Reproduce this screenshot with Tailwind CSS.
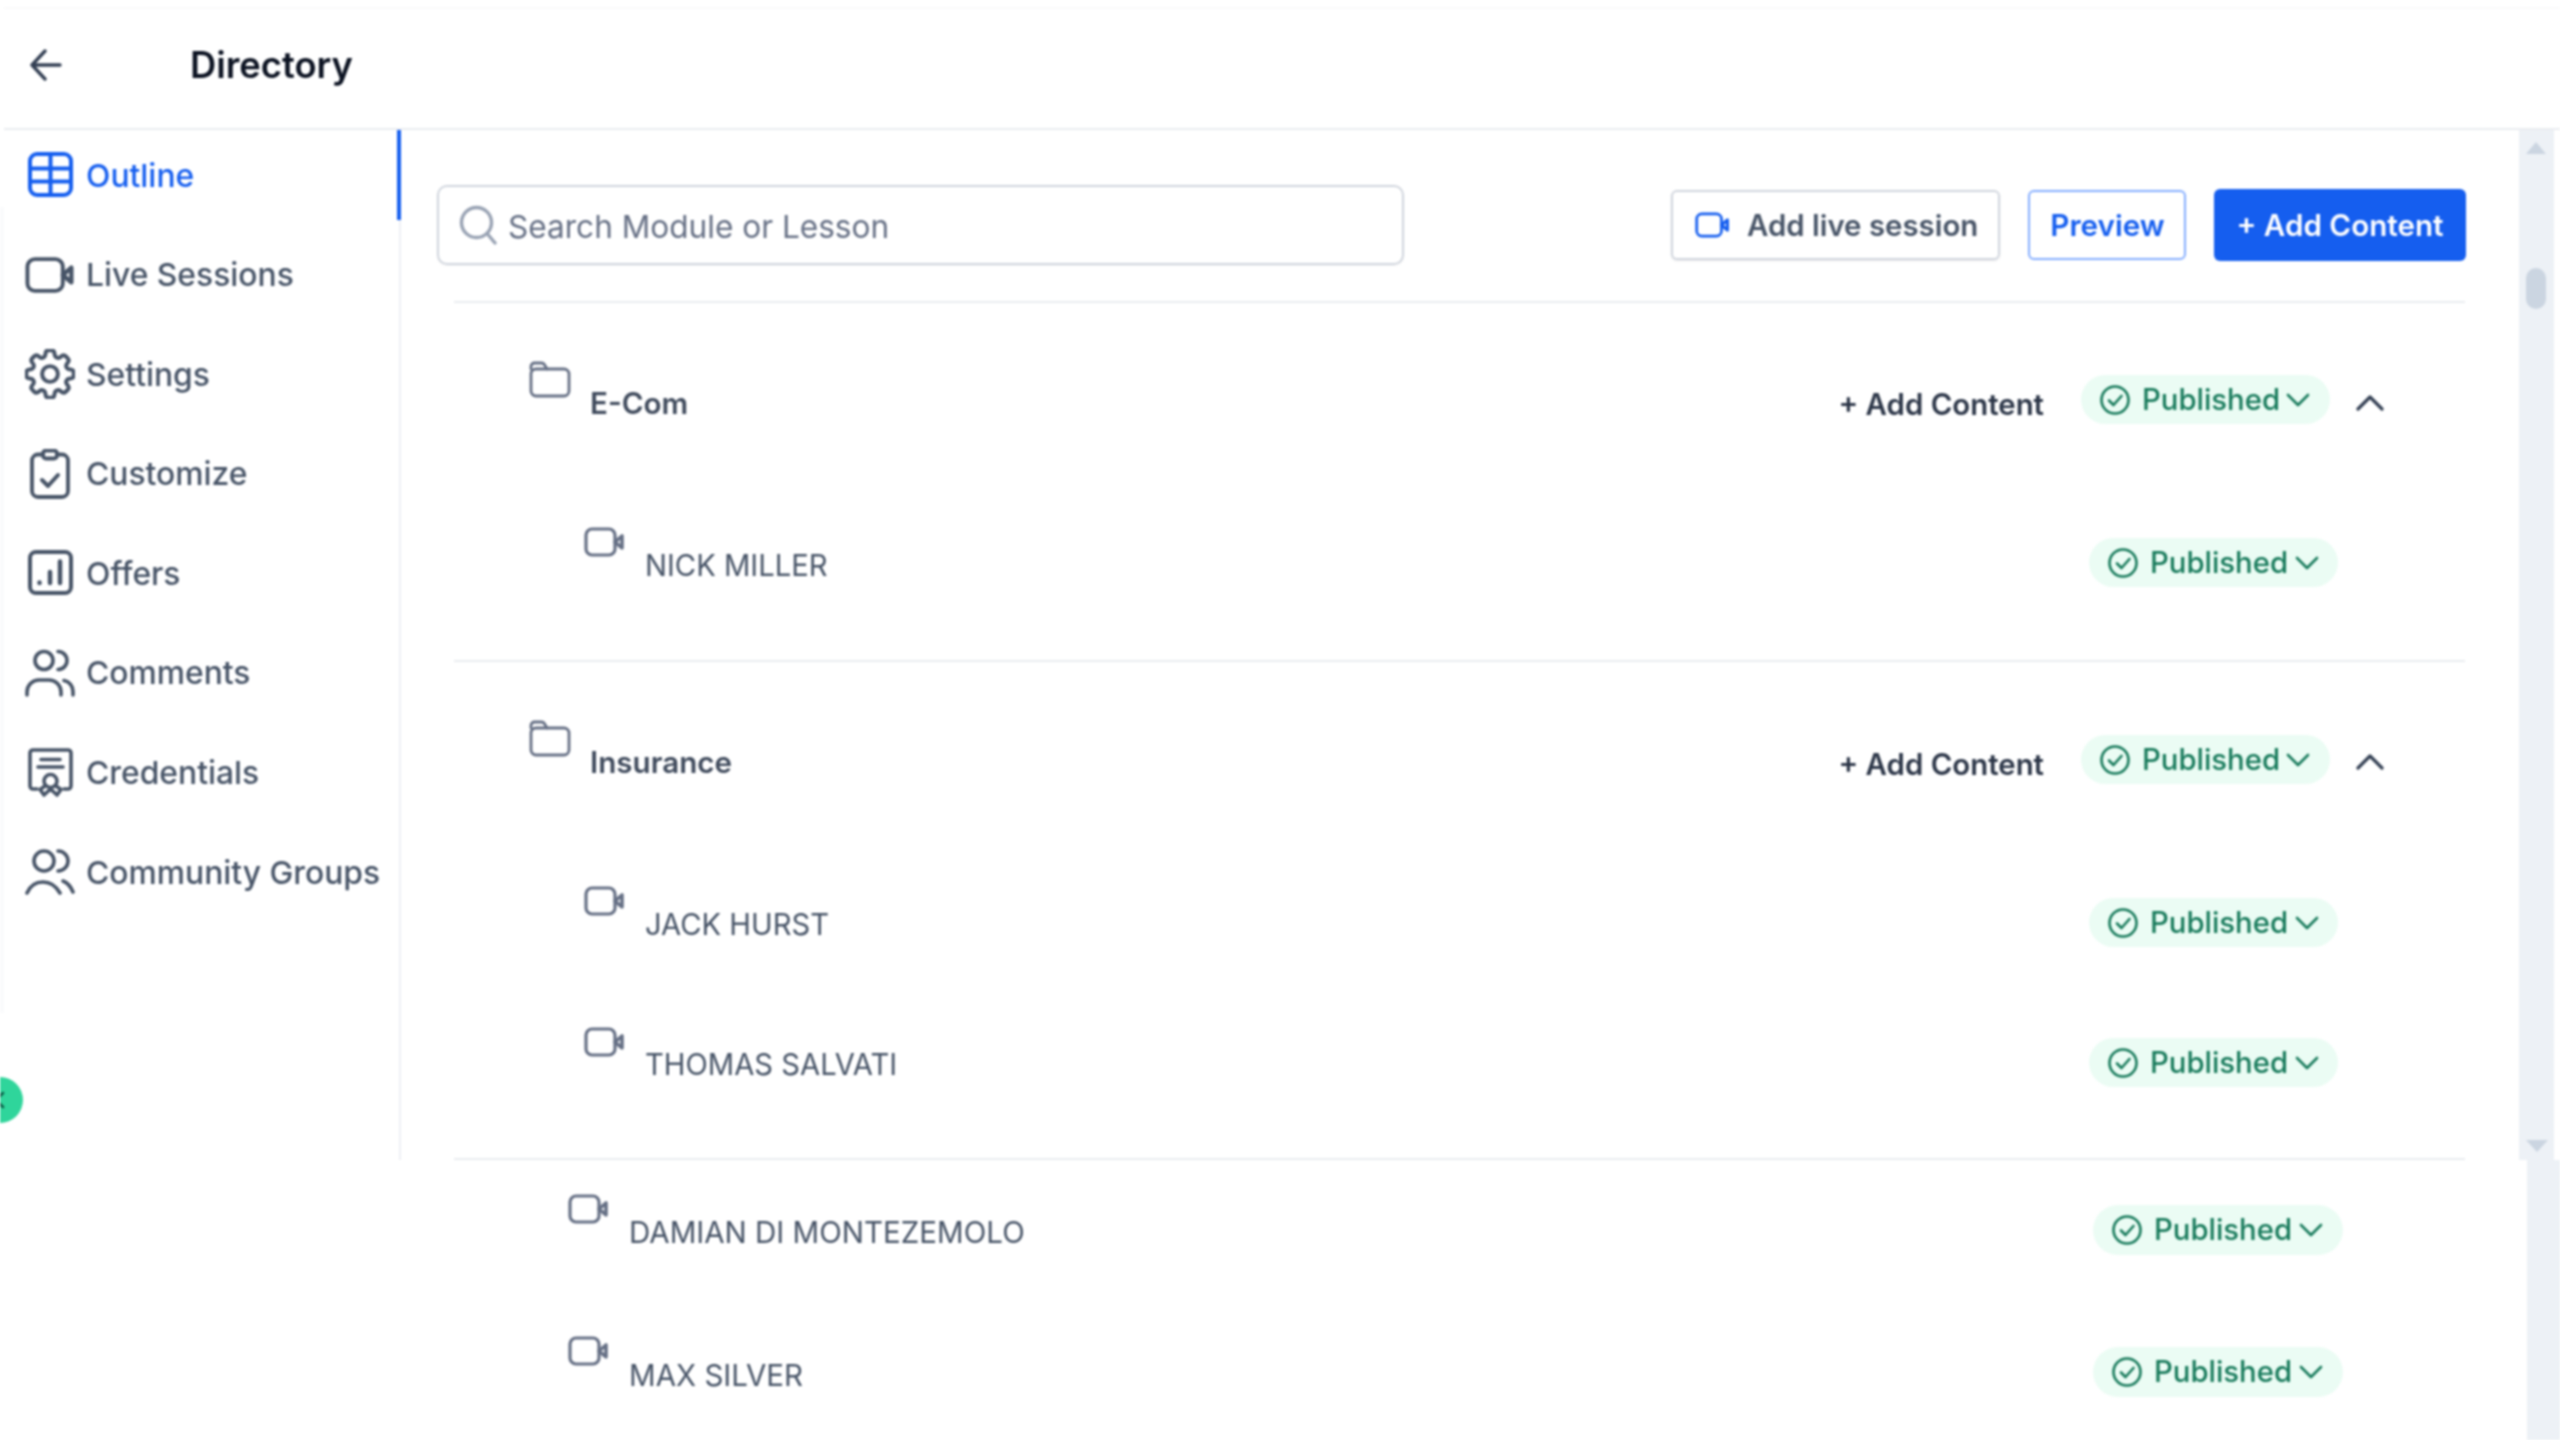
<!DOCTYPE html>
<html lang="en">
<head>
  <meta charset="UTF-8">
  <title>Directory</title>
  <script src="https://cdn.jsdelivr.net/npm/@tailwindcss/browser@4"></script>
</head>
<body class="bg-white font-['Inter','Liberation_Sans',sans-serif] overflow-hidden">
  <!-- shared icons -->
  <svg class="hidden">
    <symbol id="video" viewBox="0 0 41 30" fill="none" stroke="currentColor" stroke-width="3.200" stroke-linejoin="round" stroke-linecap="round">
      <rect x="2" y="2" width="29" height="26" rx="6"/>
      <path d="M31 15l7-6v12z" stroke-width="3.600"/>
    </symbol>
    <symbol id="folder" viewBox="0 0 42 37" fill="none" stroke="currentColor" stroke-width="2.800" stroke-linejoin="round" stroke-linecap="round">
      <path d="M2 8V5.500A3.500 3.500 0 0 1 5.500 2h7a3.500 3.500 0 0 1 3 1.700L18 8"/>
      <rect x="2" y="8" width="38" height="27" rx="5"/>
    </symbol>
    <symbol id="check" viewBox="0 0 32 32" fill="none" stroke="currentColor" stroke-width="2.600" stroke-linejoin="round" stroke-linecap="round">
      <circle cx="16" cy="16" r="13.500"/>
      <path d="M10 16.500l4.500 4.500 8-9"/>
    </symbol>
    <symbol id="down" viewBox="0 0 24 14" fill="none" stroke="currentColor" stroke-width="2.600" stroke-linejoin="round" stroke-linecap="round">
      <path d="M2 2l10 10 10-10"/>
    </symbol>
  </svg>

  <div class="relative w-[2560px] h-[1440px] overflow-hidden blur-[0.8px]">
    <!-- faint edges of the stitched capture -->
    <div class="absolute left-0 top-[207px] w-[4px] h-[806px] bg-[#fafbfc]"></div>
    <div class="absolute left-[4px] right-0 top-[7px] h-[2px] bg-[#fafafb]"></div>

    <!-- Header -->
    <header class="flex items-center h-[130px] pt-[2px] ml-[4px] border-b-2 border-[#eaecf0]">
      <svg class="ml-[25px] w-[34px] h-[32px] text-[#344054]" viewBox="0 0 34 32" fill="none" stroke="currentColor" stroke-width="3.400" stroke-linecap="round" stroke-linejoin="round">
        <path d="M31 16H3M16 2L3 16l13 14"/>
      </svg>
      <h1 class="ml-[127px] text-[36.300px] font-semibold text-[#0c1322]">Directory</h1>
    </header>

    <div class="flex h-[1030px]">
      <!-- Sidebar -->
      <nav class="relative w-[401px] shrink-0 border-r-2 border-[#eef0f5] flex flex-col gap-[9.600px] text-[31.800px] font-medium text-[#475467] whitespace-nowrap">
        <div class="absolute right-[-2px] top-0 w-[4px] h-[90px] bg-[#155eef]"></div>
        <a class="flex items-center h-[90px] pl-[25px] gap-[11px] text-[#155eef]">
          <svg class="w-[50px] h-[50px]" viewBox="0 0 50 50" fill="none" stroke="currentColor" stroke-width="4" stroke-linejoin="round">
            <rect x="5" y="4" width="41" height="41" rx="7"/><path d="M5 18.500h41M5 31.500h41M25.500 4v41"/>
          </svg>
          <span class="pt-[2px]">Outline</span>
        </a>
        <a class="flex items-center h-[90px] pl-[25px] gap-[11px]">
          <svg class="w-[50px] h-[38px] text-[#475467]"><use href="#video"/></svg>
          <span class="pt-[1px]">Live Sessions</span>
        </a>
        <a class="flex items-center h-[90px] pl-[25px] gap-[11px]">
          <svg class="w-[50px] h-[50px]" viewBox="2.500 2.500 19 19" fill="none" stroke="currentColor" stroke-width="1.500" stroke-linecap="round" stroke-linejoin="round">
            <path d="M10.343 3.940c.09-.542.56-.94 1.110-.94h1.093c.55 0 1.020.398 1.110.94l.149.894c.07.424.384.764.78.93.398.164.855.142 1.205-.108l.737-.527a1.125 1.125 0 0 1 1.450.12l.773.774c.39.389.44 1.002.12 1.450l-.527.737c-.25.35-.272.806-.107 1.204.165.397.505.71.93.78l.893.15c.543.09.94.559.94 1.109v1.094c0 .55-.397 1.020-.94 1.110l-.894.149c-.424.07-.764.383-.929.78-.165.398-.143.854.107 1.204l.527.738c.32.447.269 1.060-.12 1.450l-.774.773a1.125 1.125 0 0 1-1.449.12l-.738-.527c-.35-.25-.806-.272-1.203-.107-.398.165-.71.505-.781.929l-.149.894c-.09.542-.56.94-1.110.94h-1.094c-.55 0-1.019-.398-1.110-.94l-.148-.894c-.071-.424-.384-.764-.781-.93-.398-.164-.854-.142-1.204.108l-.738.527c-.447.32-1.060.269-1.450-.12l-.773-.774a1.125 1.125 0 0 1-.12-1.450l.527-.737c.25-.35.272-.806.108-1.204-.165-.397-.506-.71-.93-.78l-.894-.15c-.542-.09-.94-.56-.94-1.109v-1.094c0-.55.398-1.020.94-1.110l.894-.149c.424-.07.765-.383.93-.78.165-.398.143-.854-.108-1.204l-.526-.738a1.125 1.125 0 0 1 .12-1.450l.773-.773a1.125 1.125 0 0 1 1.450-.12l.737.527c.35.25.807.272 1.204.107.397-.165.71-.505.78-.929l.15-.894Z"/>
            <circle cx="12" cy="12" r="3"/>
          </svg>
          <span class="pt-[2px]">Settings</span>
        </a>
        <a class="flex items-center h-[90px] pl-[25px] gap-[11px]">
          <svg class="w-[50px] h-[50px]" viewBox="0 0 50 50" fill="none" stroke="currentColor" stroke-width="3.800" stroke-linecap="round" stroke-linejoin="round">
            <rect x="18" y="1.500" width="14" height="8" rx="3"/>
            <path d="M32 5.500h5a6 6 0 0 1 6 6V42a6 6 0 0 1-6 6H13a6 6 0 0 1-6-6V11.500a6 6 0 0 1 6-6h5"/>
            <path d="M17 31l6 6 10-11" stroke-width="4"/>
          </svg>
          <span class="pt-[1px]">Customize</span>
        </a>
        <a class="flex items-center h-[90px] pl-[25px] gap-[11px]">
          <svg class="w-[50px] h-[50px]" viewBox="0 0 50 50" fill="none" stroke="currentColor" stroke-width="4" stroke-linecap="round" stroke-linejoin="round">
            <rect x="5" y="4" width="41" height="41" rx="6"/>
            <path d="M14.500 34.500v.5M25 24v11M35 13.500V35" stroke-width="4.500"/>
          </svg>
          <span class="pt-[1px]">Offers</span>
        </a>
        <a class="flex items-center h-[90px] pl-[25px] gap-[11px]">
          <svg class="w-[50px] h-[50px]" viewBox="0 0 50 50" fill="none" stroke="currentColor" stroke-width="3.600" stroke-linecap="round" stroke-linejoin="round">
            <circle cx="19" cy="12.500" r="9"/>
            <path d="M33 3.500a9 9 0 0 1 0 18"/>
            <path d="M2 47v-3a12 12 0 0 1 12-12h10a12 12 0 0 1 12 12v3"/>
            <path d="M39 32.500a11 11 0 0 1 9 11V47"/>
          </svg>
          <span>Comments</span>
        </a>
        <a class="flex items-center h-[90px] pl-[25px] gap-[11px]">
          <svg class="w-[50px] h-[50px]" viewBox="0 0 50 50" fill="none" stroke="currentColor" stroke-width="3.600" stroke-linecap="round" stroke-linejoin="round">
            <path d="M12 41H8a3 3 0 0 1-3-3V5a3 3 0 0 1 3-3h35a3 3 0 0 1 3 3v33a3 3 0 0 1-3 3h-4"/>
            <path d="M16 11.500h19M13 19h25"/>
            <circle cx="25.500" cy="33" r="6.500"/>
            <path d="M20 38l-5 3.500 4 5.500 6.500-6 6.500 6 4-5.500-5-3.500"/>
          </svg>
          <span class="pt-[1px]">Credentials</span>
        </a>
        <a class="flex items-center h-[90px] pl-[25px] gap-[11px]">
          <svg class="w-[50px] h-[50px]" viewBox="0 0 50 50" fill="none" stroke="currentColor" stroke-width="3.600" stroke-linecap="round" stroke-linejoin="round">
            <circle cx="19" cy="14" r="10"/>
            <path d="M33 4a10 10 0 0 1 0 20"/>
            <path d="M2 46c3-7 9-11 16-11s13 4 17 11"/>
            <path d="M38 34c5 2 8 6 10 11"/>
          </svg>
          <span class="pt-[1px]">Community Groups</span>
        </a>
      </nav>

      <!-- Main -->
      <main class="flex-1 min-w-0 pl-[36px]">
        <div class="flex items-center h-[171px] pt-[19px] pr-[53px]">
          <div class="flex items-center w-[967px] h-[80px] border-2 border-[#d0d5dd] rounded-[10px] shadow-[0_1px_2px_rgba(16,24,40,0.05)] pl-[20px] gap-[11px] text-[#667085] text-[31.600px]">
            <svg class="w-[38px] h-[40px] text-[#98a2b3]" viewBox="0 0 38 40" fill="none" stroke="currentColor" stroke-width="3.400" stroke-linecap="round">
              <circle cx="17.500" cy="17.500" r="15"/><path d="M28.500 29L36 38"/>
            </svg>
            <span class="pt-[3px]">Search Module or Lesson</span>
          </div>
          <div class="ml-auto flex items-center">
            <button class="flex items-center w-[329px] h-[70px] border-2 border-[#d0d5dd] rounded-[6px] shadow-[0_1px_2px_rgba(16,24,40,0.1)] pl-[22px] gap-[17px] text-[29.400px] font-semibold text-[#475467]">
              <svg class="w-[35px] h-[26px] text-[#155eef]"><use href="#video"/></svg>
              <span class="pt-[2px]">Add live session</span>
            </button>
            <button class="w-[158px] h-[70px] ml-[28px] pt-[1px] pl-[1px] border-2 border-[#84adff] rounded-[6px] text-[29.700px] font-semibold text-[#155eef]">Preview</button>
            <button class="w-[252px] h-[72px] ml-[28px] bg-[#155eef] rounded-[6px] text-[29.600px] font-semibold text-white">+ Add Content</button>
          </div>
        </div>

        <!-- Module list -->
        <div class="w-[2011px] ml-[17px] border-t-2 border-[#eaecf0]">
          <!-- E-Com -->
          <div class="flex items-start h-[197px] pl-[75px] pr-[81px]">
            <svg class="w-[42px] h-[37px] mt-[58px] text-[#667085]"><use href="#folder"/></svg>
            <span class="ml-[19px] mt-[80px] leading-[40px] text-[29.600px] font-semibold text-[#3f4a5c]">E-Com</span>
            <span class="ml-auto mt-[82px] leading-[40px] text-[29.400px] font-semibold text-[#2c3648]">+ Add Content</span>
            <span class="ml-[37px] mt-[72px] flex items-center w-[249px] h-[49px] rounded-full bg-[#ebfcf4] pl-[18px] text-[#177a5b] text-[29.300px] font-medium">
              <svg class="w-[32px] h-[32px]"><use href="#check"/></svg><span class="ml-[11px]">Published</span><svg class="ml-[6px] w-[24px] h-[14px]"><use href="#down"/></svg>
            </span>
            <svg class="ml-[26px] mt-[91px] w-[28px] h-[17px] text-[#344054]" viewBox="0 0 28 17" fill="none" stroke="currentColor" stroke-width="3.200" stroke-linecap="round" stroke-linejoin="round"><path d="M2 15L14 3l12 12"/></svg>
          </div>
          <!-- NICK MILLER -->
          <div class="flex items-start h-[162px] pl-[130px] pr-[127px] border-b-2 border-[#eaecf0]">
            <svg class="w-[41px] h-[30px] mt-[27px] text-[#667085]"><use href="#video"/></svg>
            <span class="ml-[20px] mt-[46px] leading-[40px] text-[29.200px] text-[#475467]">NICK MILLER</span>
            <span class="ml-auto mt-[38px] flex items-center w-[249px] h-[49px] rounded-full bg-[#ebfcf4] pl-[18px] text-[#177a5b] text-[29.300px] font-medium">
              <svg class="w-[32px] h-[32px]"><use href="#check"/></svg><span class="ml-[11px]">Published</span><svg class="ml-[7px] w-[24px] h-[14px]"><use href="#down"/></svg>
            </span>
          </div>
          <!-- Insurance -->
          <div class="flex items-start h-[197px] pl-[75px] pr-[81px]">
            <svg class="w-[42px] h-[37px] mt-[58px] text-[#667085]"><use href="#folder"/></svg>
            <span class="ml-[19px] mt-[80px] leading-[40px] text-[29.600px] font-semibold text-[#3f4a5c]">Insurance</span>
            <span class="ml-auto mt-[83px] leading-[40px] text-[29.400px] font-semibold text-[#2c3648]">+ Add Content</span>
            <span class="ml-[37px] mt-[73px] flex items-center w-[249px] h-[49px] rounded-full bg-[#ebfcf4] pl-[18px] text-[#177a5b] text-[29.300px] font-medium">
              <svg class="w-[32px] h-[32px]"><use href="#check"/></svg><span class="ml-[11px]">Published</span><svg class="ml-[6px] w-[24px] h-[14px]"><use href="#down"/></svg>
            </span>
            <svg class="ml-[26px] mt-[91px] w-[28px] h-[17px] text-[#344054]" viewBox="0 0 28 17" fill="none" stroke="currentColor" stroke-width="3.200" stroke-linecap="round" stroke-linejoin="round"><path d="M2 15L14 3l12 12"/></svg>
          </div>
          <!-- JACK HURST -->
          <div class="flex items-start h-[141px] pl-[130px] pr-[127px]">
            <svg class="w-[41px] h-[30px] mt-[27px] text-[#667085]"><use href="#video"/></svg>
            <span class="ml-[20px] mt-[46px] leading-[40px] text-[29.200px] text-[#475467]">JACK HURST</span>
            <span class="ml-auto mt-[39px] flex items-center w-[249px] h-[49px] rounded-full bg-[#ebfcf4] pl-[18px] text-[#177a5b] text-[29.300px] font-medium">
              <svg class="w-[32px] h-[32px]"><use href="#check"/></svg><span class="ml-[11px]">Published</span><svg class="ml-[7px] w-[24px] h-[14px]"><use href="#down"/></svg>
            </span>
          </div>
          <!-- THOMAS SALVATI -->
          <div class="flex items-start h-[160px] pl-[130px] pr-[127px] border-b-2 border-[#eaecf0]">
            <svg class="w-[41px] h-[30px] mt-[27px] text-[#667085]"><use href="#video"/></svg>
            <span class="ml-[20px] mt-[45px] leading-[40px] text-[29.200px] text-[#475467]">THOMAS SALVATI</span>
            <span class="ml-auto mt-[38px] flex items-center w-[249px] h-[49px] rounded-full bg-[#ebfcf4] pl-[18px] text-[#177a5b] text-[29.300px] font-medium">
              <svg class="w-[32px] h-[32px]"><use href="#check"/></svg><span class="ml-[11px]">Published</span><svg class="ml-[7px] w-[24px] h-[14px]"><use href="#down"/></svg>
            </span>
          </div>
        </div>
      </main>

      <!-- Scrollbar -->
      <aside class="relative w-[35px] mr-[6px] shrink-0 bg-[#edf1f6]">
        <div class="absolute left-[7px] top-[12px] w-0 h-0 border-x-[10px] border-x-transparent border-b-[12px] border-b-[#cbd5e1]"></div>
        <div class="absolute left-[7px] top-[138px] w-[20px] h-[41px] rounded-full bg-[#cbd5e1]"></div>
        <div class="absolute left-[7px] bottom-[8px] w-0 h-0 border-x-[11px] border-x-transparent border-t-[12px] border-t-[#cbd5e1]"></div>
      </aside>
    </div>

    <!-- Lower part of the capture -->
    <div class="flex h-[280px]">
      <div class="flex-1 min-w-0">
        <div class="flex items-start h-[143px] pl-[568px] pr-[184px]">
          <svg class="w-[41px] h-[30px] mt-[34px] text-[#667085]"><use href="#video"/></svg>
          <span class="ml-[20px] mt-[52px] leading-[40px] text-[29.500px] text-[#475467]">DAMIAN DI MONTEZEMOLO</span>
          <span class="ml-auto mt-[45px] flex items-center w-[250px] h-[50px] rounded-full bg-[#ebfcf4] pl-[18px] text-[#177a5b] text-[29.300px] font-medium">
            <svg class="w-[32px] h-[32px]"><use href="#check"/></svg><span class="ml-[11px]">Published</span><svg class="ml-[7px] w-[24px] h-[14px]"><use href="#down"/></svg>
          </span>
        </div>
        <div class="flex items-start h-[137px] pl-[568px] pr-[184px]">
          <svg class="w-[41px] h-[30px] mt-[33px] text-[#667085]"><use href="#video"/></svg>
          <span class="ml-[20px] mt-[52px] leading-[40px] text-[29.500px] text-[#475467]">MAX SILVER</span>
          <span class="ml-auto mt-[44px] flex items-center w-[250px] h-[50px] rounded-full bg-[#ebfcf4] pl-[18px] text-[#177a5b] text-[29.300px] font-medium">
            <svg class="w-[32px] h-[32px]"><use href="#check"/></svg><span class="ml-[11px]">Published</span><svg class="ml-[7px] w-[24px] h-[14px]"><use href="#down"/></svg>
          </span>
        </div>
      </div>
      <div class="w-[33px] shrink-0 bg-[#edf1f6]"></div>
    </div>

    <!-- Sidebar collapse handle -->
    <div class="absolute left-[-23px] top-[1077px] flex items-center justify-end w-[46px] h-[46px] rounded-full bg-[#2fd59b] pr-[18px]">
      <svg class="w-[12px] h-[18px] text-[#0b5c46]" viewBox="0 0 12 18" fill="none" stroke="currentColor" stroke-width="2.500" stroke-linecap="round" stroke-linejoin="round"><path d="M10 2L3 9l7 7"/></svg>
    </div>
  </div>
</body>
</html>
